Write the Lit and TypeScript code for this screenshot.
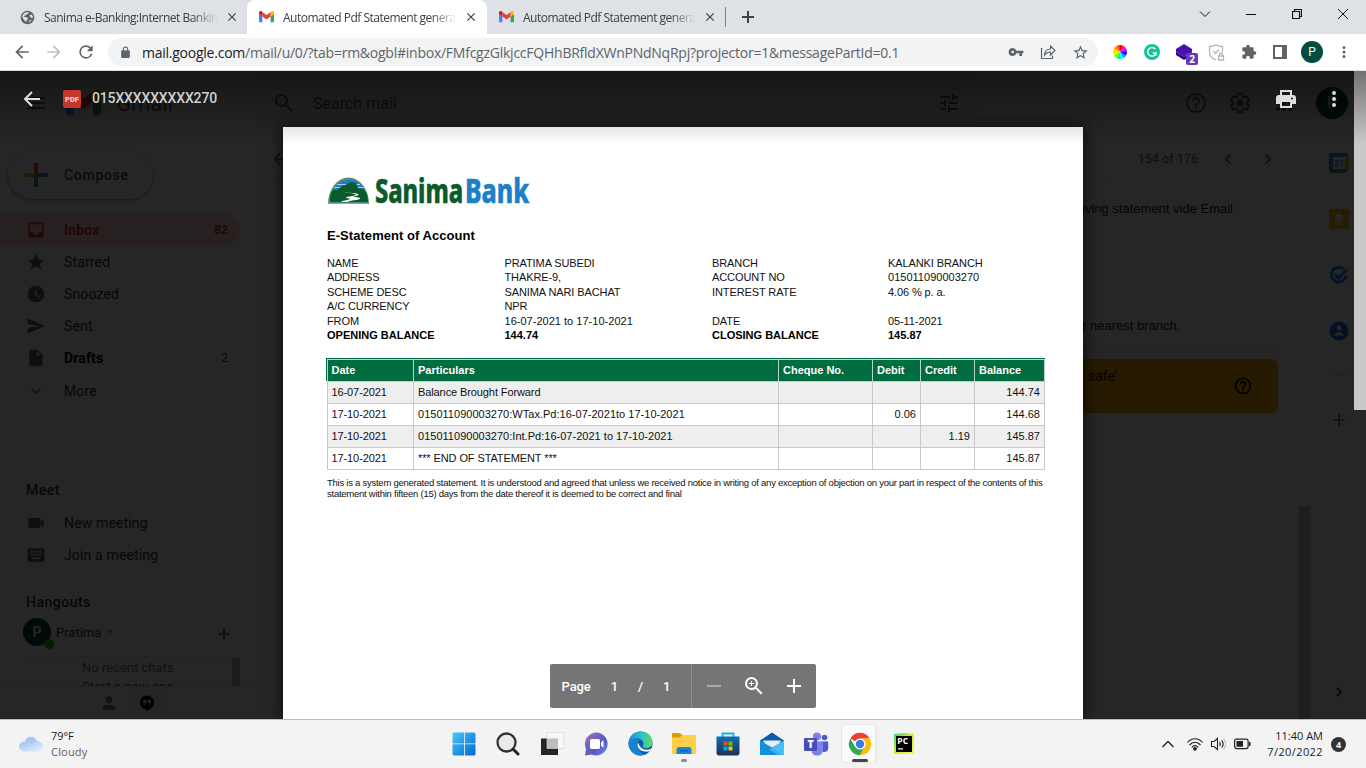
import { LitElement, html, css, svg } from "lit";
import { customElement } from "lit/decorators.js";

/* ---------- shared icon helpers ---------- */

const icon = (d: string, size = 20, box = "0 0 24 24") =>
  html`<svg width=${size} height=${size} viewBox=${box} fill="currentColor"><path d=${d}></path></svg>`;

const P = {
  back: "M20 11H7.83l5.59-5.59L12 4l-8 8 8 8 1.41-1.41L7.83 13H20v-2z",
  forward: "M12 4l-1.41 1.41L16.17 11H4v2h12.17l-5.58 5.59L12 20l8-8z",
  reload:
    "M17.65 6.35A7.96 7.96 0 0 0 12 4a8 8 0 1 0 7.73 10h-2.08A6 6 0 1 1 12 6c1.66 0 3.14.69 4.22 1.78L13 11h7V4l-2.35 2.35z",
  lock: "M18 8h-1V6A5 5 0 0 0 7 6v2H6a2 2 0 0 0-2 2v10c0 1.1.9 2 2 2h12a2 2 0 0 0 2-2V10a2 2 0 0 0-2-2zM8.9 6a3.1 3.1 0 0 1 6.2 0v2H8.9V6z",
  key: "M12.65 10A5.99 5.99 0 0 0 7 6a6 6 0 1 0 5.65 8H17v4h4v-4h2v-4H12.65zM7 14a2 2 0 1 1 0-4 2 2 0 0 1 0 4z",
  star: "M22 9.24l-7.19-.62L12 2 9.19 8.63 2 9.24l5.46 4.73L5.82 21 12 17.27 18.18 21l-1.63-7.03L22 9.24zM12 15.4l-3.76 2.27 1-4.28-3.32-2.88 4.38-.38L12 6.1l1.71 4.04 4.38.38-3.32 2.88 1 4.28L12 15.4z",
  starFull: "M12 17.27L18.18 21l-1.64-7.03L22 9.24l-7.19-.61L12 2 9.19 8.63 2 9.24l5.46 4.73L5.82 21z",
  puzzle:
    "M20.5 11H19V7a2 2 0 0 0-2-2h-4V3.5a2.5 2.5 0 0 0-5 0V5H4a2 2 0 0 0-2 2v3.8h1.5a2.7 2.7 0 0 1 0 5.4H2V20c0 1.1.9 2 2 2h3.8v-1.5a2.7 2.7 0 0 1 5.4 0V22H17a2 2 0 0 0 2-2v-4h1.5a2.5 2.5 0 0 0 0-5z",
  dots: "M12 8a2 2 0 1 0 0-4 2 2 0 0 0 0 4zm0 2a2 2 0 1 0 0 4 2 2 0 0 0 0-4zm0 6a2 2 0 1 0 0 4 2 2 0 0 0 0-4z",
  menu: "M3 18h18v-2H3v2zm0-5h18v-2H3v2zm0-7v2h18V6H3z",
  search:
    "M15.5 14h-.79l-.28-.27A6.47 6.47 0 0 0 16 9.5 6.5 6.5 0 1 0 9.5 16c1.61 0 3.09-.59 4.23-1.57l.27.28v.79l5 4.99L20.49 19l-4.99-5zm-6 0a4.5 4.5 0 1 1 0-9 4.5 4.5 0 0 1 0 9z",
  zoomIn:
    "M15.5 14h-.79l-.28-.27A6.47 6.47 0 0 0 16 9.5 6.5 6.5 0 1 0 9.5 16c1.61 0 3.09-.59 4.23-1.57l.27.28v.79l5 4.99L20.49 19l-4.99-5zm-6 0a4.5 4.5 0 1 1 0-9 4.5 4.5 0 0 1 0 9zm2.5-4h-2v2H9v-2H7V9h2V7h1v2h2v1z",
  tune: "M3 17v2h6v-2H3zM3 5v2h10V5H3zm10 16v-2h8v-2h-8v-2h-2v6h2zM7 9v2H3v2h4v2h2V9H7zm14 4v-2H11v2h10zm-6-4h2V7h4V5h-4V3h-2v6z",
  help: "M11 18h2v-2h-2v2zm1-16a10 10 0 1 0 0 20 10 10 0 0 0 0-20zm0 18a8 8 0 1 1 0-16 8 8 0 0 1 0 16zm0-14a4 4 0 0 0-4 4h2a2 2 0 1 1 4 0c0 2-3 1.75-3 5h2c0-2.25 3-2.5 3-5a4 4 0 0 0-4-4z",
  gear: "M13.85 22.25h-3.7c-.74 0-1.36-.54-1.45-1.27l-.27-1.89c-.27-.14-.53-.29-.79-.46l-1.8.72c-.7.26-1.47-.03-1.81-.65L2.2 15.53c-.35-.66-.2-1.44.36-1.88l1.53-1.19c-.01-.15-.02-.3-.02-.46 0-.15.01-.31.02-.46l-1.52-1.19c-.59-.45-.74-1.26-.37-1.88l1.85-3.19c.34-.62 1.11-.9 1.79-.63l1.81.73c.26-.17.52-.32.78-.46l.27-1.91c.09-.7.71-1.25 1.44-1.25h3.7c.74 0 1.36.54 1.45 1.27l.27 1.89c.27.14.53.29.79.46l1.8-.72c.71-.26 1.48.03 1.82.65l1.84 3.18c.36.66.2 1.44-.36 1.88l-1.52 1.19c.01.15.02.3.02.46s-.01.31-.02.46l1.52 1.19c.56.45.72 1.23.37 1.86l-1.86 3.22c-.34.62-1.11.9-1.8.63l-1.8-.72c-.26.17-.52.32-.78.46l-.27 1.91c-.1.68-.72 1.22-1.46 1.22zm-3.23-2h2.76l.37-2.55.53-.22c.44-.18.88-.44 1.34-.78l.45-.34 2.38.96 1.38-2.4-2.03-1.58.07-.56c.03-.26.06-.51.06-.78s-.03-.53-.06-.78l-.07-.56 2.03-1.58-1.39-2.4-2.39.96-.45-.35c-.42-.32-.87-.58-1.33-.77l-.52-.22-.37-2.55h-2.76l-.37 2.55-.53.21c-.44.19-.88.44-1.34.79l-.45.33-2.38-.95-1.39 2.39 2.03 1.58-.07.56a7 7 0 0 0-.06.79c0 .26.02.53.06.78l.07.56-2.03 1.58 1.38 2.4 2.39-.96.45.35c.43.33.86.58 1.33.77l.53.22.38 2.55zM12 8.5a3.5 3.5 0 1 0 0 7 3.5 3.5 0 0 0 0-7z",
  apps: "M6 8a2 2 0 1 0 0-4 2 2 0 0 0 0 4zm6 12a2 2 0 1 0 0-4 2 2 0 0 0 0 4zm-6 0a2 2 0 1 0 0-4 2 2 0 0 0 0 4zm0-6a2 2 0 1 0 0-4 2 2 0 0 0 0 4zm6 0a2 2 0 1 0 0-4 2 2 0 0 0 0 4zm6-10a2 2 0 1 0 0 4 2 2 0 0 0 0-4zm-6 4a2 2 0 1 0 0-4 2 2 0 0 0 0 4zm6 6a2 2 0 1 0 0-4 2 2 0 0 0 0 4zm0 6a2 2 0 1 0 0-4 2 2 0 0 0 0 4z",
  print:
    "M19 8h-1V3H6v5H5a3 3 0 0 0-3 3v6h4v4h12v-4h4v-6a3 3 0 0 0-3-3zM8 5h8v3H8V5zm8 12v2H8v-4h8v2zm2-4.5a1 1 0 1 1 0-2 1 1 0 0 1 0 2z",
  inbox: "M19 3H5a2 2 0 0 0-2 2v14c0 1.1.9 2 2 2h14a2 2 0 0 0 2-2V5a2 2 0 0 0-2-2zm0 12h-4c0 1.66-1.35 3-3 3s-3-1.34-3-3H5V5h14v10z",
  clock: "M12 2a10 10 0 1 0 0 20 10 10 0 0 0 0-20zm4.2 14.2L11 13V7h1.5v5.2l4.5 2.7-.8 1.3z",
  send: "M2 21l21-9L2 3v7l15 2-15 2v7z",
  draft: "M14 2H6a2 2 0 0 0-2 2v16c0 1.1.9 2 2 2h12a2 2 0 0 0 2-2V8l-6-6zm-1 7V3.5L18.5 9H13z",
  down: "M7.41 8.59L12 13.17l4.59-4.58L18 10l-6 6-6-6z",
  left: "M15.41 7.41L14 6l-6 6 6 6 1.41-1.41L10.83 12z",
  right: "M10 6L8.59 7.41 13.17 12l-4.58 4.59L10 18l6-6z",
  video: "M17 10.5V7a1 1 0 0 0-1-1H4a1 1 0 0 0-1 1v10c0 .55.45 1 1 1h12a1 1 0 0 0 1-1v-3.500l4 4v-11l-4 4z",
  keyboard:
    "M20 4H4a2 2 0 0 0-2 2v12c0 1.1.9 2 2 2h16a2 2 0 0 0 2-2V6a2 2 0 0 0-2-2zm-9 3h2v2h-2V7zm0 3.500h2v2h-2v-2zM8 7h2v2H8V7zm0 3.500h2v2H8v-2zm-1 2H5v-2h2v2zM7 9H5V7h2v2zm10 8H7v-2h10v2zm-1-4.500h-2v-2h2v2zM16 9h-2V7h2v2zm3 3.500h-2v-2h2v2zM19 9h-2V7h2v2z",
  plus: "M19 13h-6v6h-2v-6H5v-2h6V5h2v6h6v2z",
  person: "M12 12a4 4 0 1 0 0-8 4 4 0 0 0 0 8zm0 2c-2.670 0-8 1.340-8 4v2h16v-2c0-2.660-5.330-4-8-4z",
  hangouts:
    "M12 2a9.500 9.500 0 0 0-9.500 9.500A9.500 9.500 0 0 0 11.500 21v2c5-2.500 10-6.500 10-11.500A9.500 9.500 0 0 0 12 2zm-1 10l-1.500 3H8l1.500-3H7V8h4v4zm6 0l-1.500 3H14l1.500-3H13V8h4v4z",
  close: "M19 6.410L17.590 5 12 10.590 6.410 5 5 6.410 10.590 12 5 17.590 6.410 19 12 13.410 17.590 19 19 17.590 13.410 12z",
};

const gmailMark = (w: number) => html`
  <svg width=${w} height=${w * 0.75} viewBox="0 0 88 66">
    <path fill="#4285f4" d="M6 66h14V32L0 17v43c0 3.300 2.700 6 6 6"></path>
    <path fill="#34a853" d="M68 66h14c3.300 0 6-2.700 6-6V17L68 32"></path>
    <path fill="#fbbc04" d="M68 6v26l20-15V9c0-7.400-8.500-11.700-14.400-7.200"></path>
    <path fill="#ea4335" d="M20 32V6l24 18L68 6v26L44 50"></path>
    <path fill="#c5221f" d="M0 9v8l20 15V6l-5.600-4.200C8.500-2.700 0 1.600 0 9"></path>
  </svg>`;

const base = css`
  *, *::before, *::after { box-sizing: border-box; }
  svg { display: block; flex: none; }
`;

/* ---------- browser frame ---------- */

@customElement("browser-bar")
class BrowserBar extends LitElement {
  static styles = [base, css`
    :host { display: block; font-family: "Open Sans", "Noto Sans", sans-serif; }
    .strip { display: flex; height: 34px; background: #dee1e6; color: #3c4043; }
    .tab { display: flex; align-items: center; height: 34px; width: 239px; padding: 0 8px 0 12px; font-size: 12px; }
    .tab.first { width: 247px; padding: 0 8px 0 20px; border-radius: 0 0 8px 0; }
    .tab.active { width: 240px; background: #fff; border-radius: 8px 8px 0 0; padding-left: 12px; padding-right: 9px; }
    .tab.last { width: 238px; }
    .label {
      flex: 1; margin-left: 9px; margin-right: 7px; overflow: hidden; white-space: nowrap; letter-spacing: -0.5px;
      mask-image: linear-gradient(90deg, #000 calc(100% - 26px), transparent);
    }
    .x { color: #3c4043; }
    .newtab { display: flex; align-items: center; gap: 12px; height: 34px; color: #3c4043; }
    .sep { width: 1px; height: 20px; background: #80868b; }
    .grow { flex: 1; }
    .wins { display: flex; height: 28px; color: #111; }
    .win { width: 46px; display: grid; place-items: center; }
    .toolbar { display: flex; align-items: center; height: 37px; background: #fff; border-bottom: 1px solid #dadfdd; color: #5f6368; }
    .navs { display: flex; width: 108px; padding-left: 12px; gap: 12px; }
    .dim { color: #bdc1c6; }
    .omni { display: flex; align-items: center; width: 990px; height: 28px; border-radius: 14px; background: #f1f3f4; padding: 0 9px 0 11px; }
    .url { flex: 1; margin-left: 10px; font-size: 14px; letter-spacing: -0.245px; white-space: nowrap; color: #5f6368; }
    .host { color: #202124; }
    .acts { display: flex; align-items: center; gap: 16px; }
    .exts { display: flex; align-items: center; gap: 16px; padding-left: 14px; }
    .badged { position: relative; }
    .badge {
      position: absolute; left: 10px; top: 9px; width: 12px; height: 12px; border-radius: 2px; background: #673ab7;
      color: #fff; font-size: 10px; font-weight: 700; line-height: 12px; text-align: center;
    }
    .me { width: 22px; height: 22px; border-radius: 50%; background: #004d40; color: #fff; font: 12px/22px Roboto, sans-serif; text-align: center; margin: 0 -4px 0 -2px; }
  `];

  render() {
    const x = html`<span class="x">${icon(P.close, 14)}</span>`;
    const wheel = ["#f00", "#f0c", "#c0f", "#30f", "#09f", "#0ff", "#0f6", "#6f0", "#cf0", "#fd0", "#f80", "#f40"];
    return html`
      <div class="strip">
        <div class="tab first">
          <svg width="15" height="15" viewBox="0 0 16 16">
            <circle cx="8" cy="8" r="7.300" fill="#5f6368"></circle>
            <path fill="#dee1e6" d="M8.500 2c1.500.5.5 2-1 2.200C6 4.500 6.500 6 5 6.200S3.500 7 5 7.500s3.500 0 3.500 1.500-1.500 1.200-1.500 2.500-1 1.500-1.500.5S3 9.500 2.500 7.500C2.300 5 4.500 2 8.500 2zM11 5c1.500-.5 2.500 1 2.700 2.500S12.500 9 11.500 8 9.500 5.500 11 5zM9.500 12c.2-1 2-2 2.500-1.500s-1.500 2.700-2.200 2.500-.4-.5-.3-1z"></path>
          </svg>
          <span class="label">Sanima e-Banking:Internet Banking</span>${x}
        </div>
        <div class="tab active">${gmailMark(15)}<span class="label">Automated Pdf Statement generated</span>${x}</div>
        <div class="tab last">${gmailMark(15)}<span class="label">Automated Pdf Statement generated</span>${x}</div>
        <div class="newtab"><span class="sep"></span>
          <svg width="20" height="20" viewBox="0 0 20 20" stroke="currentColor" stroke-width="2"><path d="M10 4v12M4 10h12"></path></svg>
        </div>
        <div class="grow"></div>
        <div class="wins">
          <div class="win"><svg width="12" height="8" viewBox="0 0 12 8" fill="none" stroke="currentColor"><path d="M1 1.500l5 5 5-5"></path></svg></div>
          <div class="win"><svg width="10" height="10" viewBox="0 0 10 10" stroke="currentColor"><path d="M0 5.500h10"></path></svg></div>
          <div class="win"><svg width="10" height="10" viewBox="0 0 10 10" fill="none" stroke="currentColor" stroke-width="1.200"><path d="M.5 2.500h7v7h-7zM2.500 2.500v-2h7v7h-2"></path></svg></div>
          <div class="win"><svg width="10" height="10" viewBox="0 0 10 10" stroke="currentColor"><path d="M0 0l10 10M10 0L0 10"></path></svg></div>
        </div>
      </div>
      <div class="toolbar">
        <div class="navs">
          ${icon(P.back, 20)}<span class="dim">${icon(P.forward, 20)}</span>${icon(P.reload, 20)}
        </div>
        <div class="omni">
          ${icon(P.lock, 13)}
          <span class="url"><span class="host">mail.google.com</span>/mail/u/0/?tab=rm&amp;ogbl#inbox/FMfcgzGlkjccFQHhBRfldXWnPNdNqRpj?projector=1&amp;messagePartId=0.1</span>
          <div class="acts">
            ${icon(P.key, 16)}
            <svg width="16" height="16" viewBox="0 0 16 16" fill="none" stroke="currentColor" stroke-width="1.200"><path d="M2.500 4.500h-1v10h11v-3M4.500 11c.2-3.800 2.500-6 6-6V2l4.500 4.500-4.500 4.500V8c-2.800 0-4.500.7-6 3z"></path></svg>
            ${icon(P.star, 17)}
          </div>
        </div>
        <div class="exts">
          <svg width="16" height="16" viewBox="-8 -8 16 16">
            ${wheel.map((c, i) => {
              const a = ((i * 30 - 90) * Math.PI) / 180, b = a + Math.PI / 6;
              return svg`<path fill=${c} d="M0 0L${7 * Math.cos(a)} ${7 * Math.sin(a)}A7 7 0 0 1 ${7 * Math.cos(b)} ${7 * Math.sin(b)}z"></path>`;
            })}
          </svg>
          <svg width="16" height="16" viewBox="0 0 16 16"><circle cx="8" cy="8" r="8" fill="#15c39a"></circle>
            <path fill="none" stroke="#fff" stroke-width="1.400" d="M11.500 5.200A4.300 4.300 0 1 0 12.200 9H8.800M12 9.500v2"></path></svg>
          <span class="badged">
            <svg width="16" height="16" viewBox="0 0 16 16"><path fill="#2a0a7c" d="M0 8l8 4.500L16 8v3l-8 5-8-5z"></path><path fill="#4b0fb0" d="M8 0l8 5v3l-8 4.500L0 8V5z"></path></svg>
            <span class="badge">2</span>
          </span>
          <svg width="17" height="17" viewBox="0 0 17 17" fill="none" stroke="#b4b7ba" stroke-width="1.300"><path d="M8 1c2 1.200 4 1.500 6.500 1.500V8M8 1C6 2.200 4 2.500 1.500 2.500V8c0 3.500 2.500 6.500 6.500 8M5 7l2.500 2.500L11 5.500M10.500 12h5v4h-5zM11.500 12v-1.500a1.500 1.500 0 0 1 3 0V12"></path></svg>
          ${icon(P.puzzle, 16)}
          <svg width="14" height="14" viewBox="0 0 14 14" fill="none" stroke="currentColor" stroke-width="2"><path d="M1 1h12v12H1z"></path><path fill="currentColor" stroke="none" d="M9 1h4v12H9z"></path></svg>
          <span class="me">P</span>
          ${icon(P.dots, 18)}
        </div>
      </div>`;
  }
}

/* ---------- mailbox behind the viewer ---------- */

@customElement("mail-page")
class MailPage extends LitElement {
  static styles = [base, css`
    :host { display: flex; flex-direction: column; height: 649px; width: 1354px; background: #fff; color: #333; font-family: Roboto, sans-serif; overflow: hidden; }
    .ic { color: #5f6368; }
    .head { display: flex; align-items: center; height: 64px; border-bottom: 1px solid #eceff1; flex: none; }
    .brand { display: flex; align-items: center; width: 256px; padding-left: 24px; color: #5f6368; }
    .mark { margin-left: 18px; }
    .word { margin-left: 15px; font-size: 22px; padding-top: 2px; }
    .find { display: flex; align-items: center; width: 722px; height: 48px; border-radius: 8px; background: #f1f3f4; padding: 0 17px 0 16px; color: #5f6368; }
    .hint { flex: 1; margin-left: 17px; font-size: 16px; padding-top: 2px; }
    .tools { flex: 1; display: flex; align-items: center; justify-content: flex-end; gap: 20px; color: #5f6368; padding-right: 6px; }
    .me { width: 32px; height: 32px; border-radius: 50%; background: #004d40; color: #fff; font-size: 16px; line-height: 32px; text-align: center; }
    .body { display: flex; flex: 1; min-height: 0; }
    .side { width: 256px; display: flex; flex-direction: column; padding-top: 16px; }
    .compose { display: flex; align-items: center; width: 145px; height: 48px; margin-left: 8px; padding: 0 0 1px 16px; border-radius: 24px; box-shadow: 0 1px 2px rgba(60,64,67,.3), 0 1px 3px 1px rgba(60,64,67,.2); font-size: 14px; font-weight: 500; letter-spacing: .7px; color: #4c4f53; }
    .compose span { margin-left: 16px; }
    .nav { margin-top: 15px; }
    .row { display: flex; align-items: center; height: 32px; width: 240px; padding: 0 12px 0 26px; font-size: 14px; color: #333; border-radius: 0 16px 16px 0; }
    .row svg { color: #5f6368; }
    .row .t { flex: 1; margin-left: 18px; letter-spacing: .15px; }
    .row .n { font-size: 12px; }
    .row.on { background: #fcd9d4; color: #d93025; font-weight: 700; }
    .row.on svg { color: #d93025; }
    .row.b .t { font-weight: 700; color: #000; }
    .nav .row:last-child { padding-top: 2px; }
    .cap { height: 32px; line-height: 32px; padding-left: 26px; font-size: 14px; font-weight: 500; letter-spacing: .5px; }
    .meet { margin-top: 68px; padding-bottom: 6px; border-bottom: 1px solid #eee; }
    .meet .cap { height: 33px; }
    .meet .row { letter-spacing: .1px; }
    .hang { padding-top: 8px; }
    .acct { display: flex; align-items: center; height: 28px; margin: 0 22px 11px 23px; }
    .face { position: relative; width: 28px; height: 28px; border-radius: 50%; background: #004d40; color: #fff; font-size: 14px; font-weight: 500; line-height: 28px; text-align: center; }
    .dot { position: absolute; right: -3px; bottom: -3px; width: 10px; height: 10px; border-radius: 50%; background: #0c0; }
    .nm { margin-left: 5px; font-size: 13px; }
    .tri { margin-left: 6px; border: 3.500px solid transparent; border-top: 4px solid #999; border-bottom: 0; }
    .acct .ic { margin-left: auto; padding-top: 3px; }
    .chats { display: flex; height: 29px; margin-left: 23px; width: 217px; border-top: 1px solid #ddd; overflow: hidden; }
    .msgs { flex: 1; padding-left: 59px; font-size: 13px; line-height: 19px; color: #777; white-space: nowrap; }
    .link { color: #15c; letter-spacing: .1px; }
    .thumb { width: 8px; background: #bbb; }
    .foot { display: flex; height: 33px; border-top: 1px solid #ddd; padding-left: 89px; color: #777; }
    .ft { width: 40px; display: grid; place-items: center; }
    .ft.sel { width: 35px; background: #f4f4f4; border: 1px solid #e4e4e4; border-width: 0 1px; color: #000; }
    .main { width: 1036px; }
    .bar { display: flex; align-items: center; justify-content: flex-end; height: 49px; border-bottom: 1px solid #eee; color: #5f6368; font-size: 12px; }
    .bar .lead { margin-left: 14px; margin-right: auto; }
    .count { letter-spacing: .25px; margin-right: 20px; }
    .bar .pair { display: flex; gap: 20px; padding-right: 14px; }
    .mail { font: 13px/20px "Liberation Sans", Arial, sans-serif; color: #222; width: 982px; margin-left: 40px; padding-left: 786px; white-space: nowrap; }
    .l1 { padding-top: 15px; }
    .l2 { padding-top: 97px; padding-bottom: 15px; border-bottom: 1px dotted #ccc; }
    .warn { display: flex; justify-content: space-between; width: 982px; height: 54px; margin: 7px 0 0 40px; padding: 8px 25px 0 792px; border-radius: 6px; background: #fbb000; font-size: 14px; line-height: 19px; color: #202124; }
    .warn svg { margin-top: 9px; color: #000; }
    .lane { width: 19px; padding: 371px 1px 0 7px; }
    .lane i { display: block; height: 214px; background: #c8c8c8; }
    .rail { width: 43px; border-left: 1px solid #eee; display: flex; flex-direction: column; align-items: center; padding: 18px 0 0 11px; gap: 36px; }
    .rule { width: 20px; height: 1px; background: #ddd; margin: -2px 0; }
    .open { margin-top: auto; margin-bottom: 18px; color: #333; }
  `];

  render() {
    const row = (p: string, t: string, n = "", c = "") =>
      html`<div class="row ${c}">${icon(p, 20)}<span class="t">${t}</span><span class="n">${n}</span></div>`;
    return html`
      <div class="head">
        <div class="brand">${icon(P.menu, 24)}<span class="mark">${gmailMark(35)}</span><span class="word">Gmail</span></div>
        <div class="find">${icon(P.search, 24)}<span class="hint">Search mail</span>${icon(P.tune, 24)}</div>
        <div class="tools">${icon(P.help, 24)}${icon(P.gear, 24)}${icon(P.apps, 24)}<span class="me">P</span></div>
      </div>
      <div class="body">
        <div class="side">
          <div class="compose">
            <svg width="24" height="24" viewBox="0 0 24 24"><path fill="#ea4335" d="M10 0h4v12h-4z"></path><path fill="#34a853" d="M10 12h4v12h-4z"></path><path fill="#4285f4" d="M13 10h11v4H10z"></path><path fill="#fbbc04" d="M0 10h11l-1 4H0z"></path></svg>
            <span>Compose</span>
          </div>
          <div class="nav">
            ${row(P.inbox, "Inbox", "82", "on")}${row(P.starFull, "Starred")}${row(P.clock, "Snoozed")}
            ${row(P.send, "Sent")}${row(P.draft, "Drafts", "2", "b")}${row(P.down, "More")}
          </div>
          <div class="meet">
            <div class="cap">Meet</div>
            ${row(P.video, "New meeting")}${row(P.keyboard, "Join a meeting")}
          </div>
          <div class="hang">
            <div class="cap">Hangouts</div>
            <div class="acct">
              <span class="face">P<i class="dot"></i></span><span class="nm">Pratima</span><i class="tri"></i>
              <span class="ic">${icon(P.plus, 20)}</span>
            </div>
            <div class="chats"><div class="msgs">No recent chats<br /><span class="link">Start a new one</span></div><i class="thumb"></i></div>
            <div class="foot"><div class="ft">${icon(P.person, 20)}</div><div class="ft sel">${icon(P.hangouts, 18)}</div></div>
          </div>
        </div>
        <div class="main">
          <div class="bar">
            <span class="lead">${icon(P.back, 20)}</span><span class="count">154 of 176</span>
            <span class="pair">${icon(P.left, 20)}${icon(P.right, 20)}</span>
          </div>
          <div class="mail l1">iving statement vide Email</div>
          <div class="mail l2">r nearest branch.</div>
          <div class="warn"><span>safe'</span>${icon(P.help, 20)}</div>
        </div>
        <div class="lane"><i></i></div>
        <div class="rail">
          <svg width="20" height="20" viewBox="0 0 20 20"><path fill="#fff" d="M3 3h13v13H3z"></path><path fill="#4285f4" d="M1 0h18v4H4v12H0V1z"></path><path fill="#fbbc04" d="M16 4h4v12h-4z"></path><path fill="#34a853" d="M0 16h16v4H1z"></path><path fill="#ea4335" d="M16 16h4l-4 4z"></path><text x="10" y="13.500" font-family="Roboto" font-size="9" font-weight="700" text-anchor="middle" fill="#4285f4">31</text></svg>
          <svg width="20" height="20" viewBox="0 0 20 20"><rect width="20" height="20" rx="1.500" fill="#fbbc04"></rect><path fill="#fff" d="M10 4.500a4 4 0 0 0-2.300 7.300V13h4.600v-1.200A4 4 0 0 0 10 4.500zM8 14h4v1.500H8z"></path></svg>
          <svg width="20" height="20" viewBox="0 0 20 20" fill="none" stroke="#2684fc" stroke-width="3"><path d="M14.500 4A7.300 7.300 0 1 0 17 10.500"></path><path d="M6 9.500l3.500 3.500L18 4"></path></svg>
          <svg width="20" height="20" viewBox="0 0 20 20"><circle cx="10" cy="10" r="9.500" fill="#1a73e8"></circle><circle cx="10" cy="7" r="2.400" fill="#fff"></circle><path fill="#fff" d="M5.500 14.500c0-4.500 9-4.500 9 0z"></path></svg>
          <i class="rule"></i>
          <span class="ic">${icon(P.plus, 20)}</span>
          <span class="open">${icon(P.right, 20)}</span>
        </div>
      </div>`;
  }
}

/* ---------- attachment viewer ---------- */

@customElement("bank-statement")
class BankStatement extends LitElement {
  static styles = [base, css`
    :host { display: block; width: 800px; height: 593px; padding: 48px 38px 0 44px; background: #fff; box-shadow: 0 0 14px 2px rgba(0,0,0,.6); font: 11px/14.400px "Liberation Sans", Arial, sans-serif; color: #111; letter-spacing: -.1px; }
    .logo { margin-left: 1px; }
    h1 { margin: 20px 0 0; font-size: 13px; line-height: 18px; letter-spacing: .05px; color: #000; }
    .facts { display: grid; grid-template-columns: 177.500px 207.500px 176px 1fr; grid-auto-rows: 14.400px; margin-top: 11px; white-space: nowrap; }
    .digits { letter-spacing: .02px; }
    .strong { font-weight: 700; color: #000; letter-spacing: 0; }
    .grid { margin: 16px 0 0 -1px; border-top: 1px solid #006c3f; padding-left: 1px; width: 719px; height: 112px; background: linear-gradient(#006c3f 22px, transparent 22px); }
    table { border-collapse: collapse; table-layout: fixed; width: 718px; background: #fff; }
    th, td { height: 22px; padding: 0 4px 2px; border: 1px solid #c8c8c8; text-align: left; white-space: nowrap; }
    th:first-child, td:first-child { padding-left: 3.500px; }
    th { background: #006c3f; color: #fff; border-color: #b9d3c6; letter-spacing: 0; }
    tr.alt td { background: #eee; }
    td.num { text-align: right; letter-spacing: 0; }
    .note { margin-top: 7px; font-size: 9.500px; line-height: 11px; letter-spacing: -.252px; white-space: nowrap; }
  `];

  render() {
    const facts = [
      ["NAME", "PRATIMA SUBEDI", "BRANCH", "KALANKI BRANCH"],
      ["ADDRESS", "THAKRE-9,", "ACCOUNT NO", "015011090003270"],
      ["SCHEME DESC", "SANIMA NARI BACHAT", "INTEREST RATE", "4.06 % p. a."],
      ["A/C CURRENCY", "NPR", "", ""],
      ["FROM", "16-07-2021 to 17-10-2021", "DATE", "05-11-2021"],
    ];
    const last = ["OPENING BALANCE", "144.74", "CLOSING BALANCE", "145.87"];
    const rows = [
      ["16-07-2021", "Balance Brought Forward", "", "", "", "144.74"],
      ["17-10-2021", "015011090003270:WTax.Pd:16-07-2021to 17-10-2021", "", "0.06", "", "144.68"],
      ["17-10-2021", "015011090003270:Int.Pd:16-07-2021 to 17-10-2021", "", "", "1.19", "145.87"],
      ["17-10-2021", "*** END OF STATEMENT ***", "", "", "", "145.87"],
    ];
    const digits = (t: string) => (/^\d{2}/.test(t) && t.length > 10 ? "digits" : "");
    return html`
      <svg class="logo" width="206" height="32" viewBox="0 0 206 32">
        <defs><clipPath id="dome"><path d="M1.500 27.500a19.300 23 0 0 1 38.600 0z"></path></clipPath></defs>
        <path d="M0 29a20.500 26.500 0 0 1 41 0z" fill="#5c8f72"></path>
        <path d="M1 28.200a19.700 25 0 0 1 39 0z" fill="#f4f8f5"></path>
        <g clip-path="url(#dome)">
          <path fill="#1b7fc9" d="M0 0h42v30H0z"></path>
          <path stroke="#a9d2ee" stroke-width="1" d="M8 9.500h24M4 12.500h33M3 15.500h36"></path>
          <path fill="#0a5a2c" d="M0 17l5-2 4 0 5-4 3-1 6-3 5 1 2 5 5 1 6 5v10H0z"></path>
          <path fill="#fff" d="M14 17.500c6 .5 11 .5 13 1.500s0 1.700-4 2.200c-5 .6-7 1.500-2 2.300l1 .8c-3 1-8 1.500-9 2.700h6c3-1.500 12-2 13-3.200s-4-1.500-7-2c3-.7 7-1.500 5-2.700s-9-1.500-16-1.600z"></path>
        </g>
        <g font-family="Noto Sans" font-weight="800" font-size="34">
          <text x="47" y="27.500" textLength="88" lengthAdjust="spacingAndGlyphs" fill="#0a5a2c" stroke="#0a5a2c" stroke-width=".5">Sanima</text>
          <text x="137" y="27.500" textLength="64" lengthAdjust="spacingAndGlyphs" fill="#1b7fc9" stroke="#1b7fc9" stroke-width=".5">Bank</text>
        </g>
      </svg>
      <h1>E-Statement of Account</h1>
      <div class="facts">
        ${facts.flat().map((t) => html`<span class=${digits(t)}>${t}</span>`)}
        ${last.map((t) => html`<span class="strong">${t}</span>`)}
      </div>
      <div class="grid">
        <table>
          <colgroup><col width="86" /><col width="365" /><col width="94" /><col width="48" /><col width="54" /><col width="70" /></colgroup>
          <tr>${["Date", "Particulars", "Cheque No.", "Debit", "Credit", "Balance"].map((t) => html`<th>${t}</th>`)}</tr>
          ${rows.map((r, i) => html`<tr class=${i % 2 ? "" : "alt"}>${r.map((t, j) => html`<td class=${j > 2 ? "num" : digits(t)}>${t}</td>`)}</tr>`)}
        </table>
      </div>
      <div class="note">This is a system generated statement. It is understood and agreed that unless we received notice in writing of any exception of objection on your part in respect of the contents of this<br />statement within fifteen (15) days from the date thereof it is deemed to be correct and final</div>`;
  }
}

@customElement("file-viewer")
class FileViewer extends LitElement {
  static styles = [base, css`
    :host { display: block; font-family: Roboto, sans-serif; }
    .stage { display: flex; justify-content: center; padding-top: 56px; }
    .track { position: absolute; right: 0; top: 0; width: 12px; height: 649px; background: #262626; }
    .track i { display: block; height: 339px; background: #c9c9c9; }
    .shade { position: absolute; left: 0; right: 0; top: 0; height: 73px; background: linear-gradient(rgba(0,0,0,.43), transparent); }
    .head { position: absolute; left: 0; right: 0; top: 0; height: 56px; display: flex; align-items: center; padding: 0 22px; color: #ddd; }
    .pdf { width: 18px; height: 18px; margin-left: 21px; border-radius: 2px; background: #c5372c; color: #e8d0ce; font-size: 7.500px; font-weight: 900; line-height: 19px; text-align: center; }
    .name { margin-left: 11px; font-size: 14px; font-weight: 500; letter-spacing: -.15px; color: #d0d0d0; padding-bottom: 2px; }
    .right { margin-left: auto; display: flex; gap: 24px; align-items: center; margin-right: -2px; }
    .pager { position: absolute; left: 550px; top: 593px; width: 266px; height: 44px; border-radius: 2px; background: #757575; color: #fff; display: flex; align-items: center; font-size: 13px; font-weight: 500; }
    .pages { display: flex; align-items: center; width: 142px; height: 44px; padding-left: 11.500px; border-right: 1px solid #8f8f8f; white-space: pre; letter-spacing: -.1px; }
    .pages span:nth-child(2) { margin-left: 20px; }
    .pages span:nth-child(n + 3) { margin-left: 20px; }
    .zooms { flex: 1; display: flex; align-items: center; justify-content: space-between; padding: 0 12px 0 12px; }
    .off { color: #a8a8a8; }
  `];

  render() {
    return html`
      <div class="stage"><bank-statement></bank-statement></div>
      <div class="track"><i></i></div>
      <div class="shade"></div>
      <div class="head">
        <svg width="20" height="20" viewBox="0 0 20 20" fill="none" stroke="currentColor" stroke-width="2"><path d="M18 10H3.500M10 3l-7 7 7 7"></path></svg>
        <span class="pdf">PDF</span><span class="name">015XXXXXXXXX270</span>
        <div class="right">${icon(P.print, 24)}${icon(P.dots, 24)}</div>
      </div>
      <div class="pager">
        <div class="pages"><span>Page</span><span>1</span><span>/</span><span>1</span></div>
        <div class="zooms">
          <span class="off"><svg width="20" height="20" viewBox="0 0 20 20"><path fill="currentColor" d="M3 9h14v2H3z"></path></svg></span>
          ${icon(P.zoomIn, 24)}
          <svg width="20" height="20" viewBox="0 0 20 20"><path fill="currentColor" d="M3 9h14v2H3zM9 3h2v14H9z"></path></svg>
        </div>
      </div>`;
  }
}

/* ---------- desktop taskbar ---------- */

@customElement("task-bar")
class TaskBar extends LitElement {
  static styles = [base, css`
    :host { display: grid; grid-template-columns: 442px 484px 1fr; height: 48px; background: #f3f3f3; border-top: 1px solid #bbb; font-family: "Open Sans", "Noto Sans", sans-serif; font-size: 11px; color: #1b1b1b; }
    .weather { display: flex; align-items: center; padding-left: 18px; gap: 7px; line-height: 16px; letter-spacing: -.1px; }
    .soft { color: #5f5f5f; letter-spacing: .2px; }
    .apps { display: grid; grid-template-columns: repeat(11, 44px); }
    .app { display: grid; place-items: center; position: relative; height: 47px; }
    .app.run::after { content: ""; position: absolute; left: 19px; top: 39px; width: 6px; height: 3px; border-radius: 2px; background: #8a8a8a; }
    .app.cur::before { content: ""; position: absolute; left: 3px; top: 4px; width: 35px; height: 39px; border-radius: 4px; background: #fbfbfb; border: 1px solid #e6e6e6; box-shadow: 3px 0 0 #efefef; }
    .app.cur::after { content: ""; position: absolute; left: 14px; top: 39px; width: 16px; height: 3px; border-radius: 2px; background: #444; }
    .app svg { position: relative; }
    .tray { display: flex; align-items: center; justify-content: flex-end; padding-right: 20px; }
    .tray svg { margin-right: 7px; }
    .tray .chev { margin-right: 11px; }
    .tray .wifi { margin-right: 6px; }
    .time { text-align: right; line-height: 16px; margin: 0 8px 0 9px; white-space: nowrap; }
    .date { letter-spacing: .4px; }
    .note { width: 15px; height: 15px; border-radius: 50%; background: #333; color: #fff; font-size: 9px; font-weight: 700; line-height: 15px; text-align: center; }
  `];

  render() {
    const apps = [
      html`<svg width="24" height="24" viewBox="0 0 24 24"><defs><linearGradient id="w" x1="0" y1="0" x2="1" y2="1" ><stop stop-color="#4cc8fb"></stop><stop offset="1" stop-color="#0068cf"></stop></linearGradient></defs><path fill="url(#w)" d="M1.500.5h10.700v11H.5v-10zM13 .5h9.500l1 1v10H13zM.5 12.300h11.700v11.200H1.500l-1-1zM13 12.300h10.500v10.200l-1 1H13z"></path></svg>`,
      html`<svg width="24" height="24" viewBox="0 0 24 24" fill="none"><circle cx="10.500" cy="10.500" r="9" fill="#e9e9e9" stroke="#333" stroke-width="2.300"></circle><path stroke="#222" stroke-width="3" stroke-linecap="round" d="M17.500 17.500l4.500 4.500"></path></svg>`,
      html`<svg width="26" height="24" viewBox="0 0 26 24"><path fill="#252525" d="M2 6.500h17V23H2z"></path><path fill="#fafafa" opacity=".72" d="M8 .5h17v16H8z"></path><path fill="none" stroke="#d8d8d8" stroke-width=".7" d="M8 .5h17v16H8z"></path></svg>`,
      html`<svg width="24" height="24" viewBox="0 0 24 24"><defs><linearGradient id="c" x1="0" y1="0" x2="1" y2="1"><stop stop-color="#a877b5"></stop><stop offset=".6" stop-color="#5257c4"></stop><stop offset="1" stop-color="#7e8bea"></stop></linearGradient></defs><path fill="url(#c)" d="M12.500.5a11.500 11.500 0 1 1-5 22L1 23.500l1-6.500A11.500 11.500 0 0 1 12.500.5z"></path><rect x="6" y="7" width="10" height="10" rx="1.500" fill="#fff"></rect><path fill="#fff" d="M17 10.500l2.500-2.500v8L17 13.500z"></path></svg>`,
      html`<svg width="25" height="25" viewBox="0 0 25 25"><defs><linearGradient id="e" x1="0" y1="0" x2="1" y2="0"><stop stop-color="#1d93d8"></stop><stop offset=".55" stop-color="#2fc3c8"></stop><stop offset="1" stop-color="#66d955"></stop></linearGradient></defs><circle cx="12.500" cy="12.500" r="12" fill="#0c5aa8"></circle><path fill="#1683d3" d="M.5 12.500C1 8 8 5.500 12 9c-3 2-4.500 6-1 10.500 2 2.600 5 4 7 3.600A12 12 0 0 1 .5 12.500z"></path><path fill="url(#e)" d="M.7 11.500C1.800 4.500 7 .5 12.700.5c7 0 11.800 5 11.800 10.500 0 4-3 6-6 6-3.500 0-4.500-1.500-3.500-2.500 1-1.500.5-5-3-6.500C7.500 6.300 2.500 8 .7 11.500z"></path><path fill="#f3f3f3" d="M10.800 12c.5 5.500 6.200 8.500 13 5.500-.5 1.200-1.200 2-2 2.800-5 1.300-11.500-.5-12.300-5.300-.2-1.400.4-2.500 1.300-3z"></path></svg>`,
      html`<svg width="24" height="24" viewBox="0 0 24 24"><path fill="#dd9b08" d="M0 2.500C0 1.500.5 1 1.500 1H8l2.500 2.500L8 6H0z"></path><path fill="#ffcf48" d="M0 5.500h8L10.500 3H22.500c1 0 1.500.5 1.500 1.500V22H0z"></path><path fill="#1684d8" d="M4.500 22v-4.500c0-1.500 1-2.500 2.500-2.500h10c1.500 0 2.500 1 2.500 2.500V22z"></path><path fill="#0a61ae" d="M8 18h8v1.500H8z"></path></svg>`,
      html`<svg width="24" height="24" viewBox="0 0 24 24"><defs><linearGradient id="s" x1="0" y1="0" x2="0" y2="1"><stop stop-color="#0d6eb9"></stop><stop offset="1" stop-color="#20324f"></stop></linearGradient></defs><path fill="none" stroke="#1fa7e8" stroke-width="1.800" d="M6.500 6V1.500h11V6"></path><path fill="url(#s)" d="M.5 4.500h23V21c0 1.500-1 2.500-2.500 2.500H3C1.500 23.500.5 22.500.5 21z"></path><path fill="#f25022" d="M7.500 9.500h4v4h-4z"></path><path fill="#7fba00" d="M12.500 9.500h4v4h-4z"></path><path fill="#00a4ef" d="M7.500 14.500h4v4h-4z"></path><path fill="#ffb900" d="M12.500 14.500h4v4h-4z"></path></svg>`,
      html`<svg width="24" height="24" viewBox="0 0 24 24"><path fill="#0b5cad" d="M0 8.500L12 .5l12 8v2H0z"></path><path fill="#e9eef4" d="M2.500 8.500h19L13 16h-2z"></path><path fill="#31b4f2" d="M0 8.500l12 7 12-7V23H0z"></path><path fill="#1490df" d="M0 8.500l24 14.500H0z"></path><path fill="#53c9f8" d="M24 8.500L9 17.500 18 23h6z" opacity=".6"></path></svg>`,
      html`<svg width="26" height="24" viewBox="0 0 26 24"><circle cx="14" cy="4.500" r="4" fill="#7b83eb"></circle><circle cx="21.500" cy="5.500" r="2.800" fill="#5059c9"></circle><path fill="#5059c9" d="M18 9.500h7.200V16c0 3-2 4.500-5.200 4z"></path><path fill="#7b83eb" d="M8.500 9.500H20v8c0 4-2.500 6-6 6s-5.500-2-5.500-6z"></path><rect x="1" y="6" width="13" height="13" rx="1" fill="#4450b8"></rect><text x="7.500" y="16.300" fill="#fff" font-family="Open Sans" font-size="10.500" font-weight="800" text-anchor="middle">T</text></svg>`,
      html`<svg width="24" height="24" viewBox="-12 -12 24 24"><path fill="#ea4335" d="M-9.700-5.600A11.200 11.200 0 0 1 9.700-5.600H0A5.600 5.600 0 0 0-4.850-2.800z"></path><path fill="#34a853" d="M-9.700-5.600L-4.850 2.800A5.600 5.600 0 0 0 4.850 2.800L0 11.200A11.200 11.200 0 0 1-9.700-5.600z"></path><path fill="#fbbc04" d="M9.700-5.600A11.200 11.200 0 0 1 0 11.200L4.850 2.800A5.600 5.600 0 0 0 0-5.600z"></path><circle r="5.300" fill="#fff"></circle><circle r="4.200" fill="#3a7de8"></circle></svg>`,
      html`<svg width="22" height="22" viewBox="0 0 22 22"><defs><linearGradient id="p" x1="0" y1="0" x2="1" y2="1"><stop stop-color="#21d789"></stop><stop offset=".4" stop-color="#c8e635"></stop><stop offset="1" stop-color="#fcf84a"></stop></linearGradient></defs><path fill="url(#p)" d="M1 1l10-1 10 1v20H1z"></path><path fill="#000" d="M3 3h16v16H3z"></path><text x="4.300" y="11" fill="#fff" font-family="Open Sans" font-size="8.500" font-weight="700">PC</text><path fill="#fff" d="M5 15.300h5v1.200H5z"></path></svg>`,
    ];
    return html`
      <div class="weather">
        <svg width="26" height="18" viewBox="0 0 26 18"><defs><linearGradient id="k" x1="0" y1="0" x2="1" y2="1"><stop stop-color="#9dbfec"></stop><stop offset="1" stop-color="#eaf2fc"></stop></linearGradient></defs><path fill="#a9c6ef" d="M7 7a6 6 0 0 1 11.500-1.500L20 12H7z"></path><path fill="url(#k)" d="M6 16.500a5 5 0 1 1 1.500-9.800c3-.7 5 .8 6 2.500 2-3.500 6-4.500 8.500-2 4.500.3 4.500 9.300-1 9.300z"></path></svg>
        <div>79°F<br /><span class="soft">Cloudy</span></div>
      </div>
      <div class="apps">${apps.map((a, i) => html`<div class="app ${i === 5 ? "run" : i === 9 ? "cur" : ""}">${a}</div>`)}</div>
      <div class="tray">
        <svg class="chev" width="14" height="14" viewBox="0 0 14 14" fill="none" stroke="#222" stroke-width="1.300"><path d="M1.500 10L7 4.500l5.500 5.500"></path></svg>
        <svg class="wifi" width="18" height="16" viewBox="0 0 18 16" fill="none" stroke="#222" stroke-width="1.200"><path d="M1.500 6.500c4-5 11-5 15 0M3.500 9c3-3.700 8-3.700 11 0M5.800 11.300c1.800-2.200 4.600-2.200 6.400 0"></path><circle cx="9" cy="12.800" r="1.300" fill="#222"></circle></svg>
        <svg width="17" height="14" viewBox="0 0 17 14" fill="none" stroke="#222" stroke-width="1.100"><path d="M1.500 4.500h2.500l3.500-3v11l-3.500-3H1.500zM9.500 5c1 1.200 1 2.800 0 4M11.500 3.300c2 2.200 2 5.200 0 7.400"></path><path stroke="#bbb" d="M13.500 1.700c3 3.200 3 7.400 0 10.600"></path></svg>
        <svg width="17" height="12" viewBox="0 0 17 12"><rect x=".6" y="1.100" width="13.500" height="9.500" rx="2" fill="none" stroke="#222" stroke-width="1.200"></rect><path fill="#222" d="M2.500 3h6.500v5.800H2.500zM15 4h1.500v4H15z"></path></svg>
        <div class="time">11:40 AM<br /><span class="date">7/20/2022</span></div>
        <span class="note">4</span>
      </div>`;
  }
}

/* ---------- page ---------- */

@customElement("app-root")
class AppRoot extends LitElement {
  static styles = css`
    :host { display: flex; flex-direction: column; width: 1366px; height: 768px; overflow: hidden; }
    .view { position: relative; height: 649px; overflow: hidden; background: #fff; }
    .dimmer { position: absolute; inset: 0; background: rgba(0,0,0,.85); }
    .over { position: absolute; inset: 0; }
  `;

  render() {
    return html`
      <browser-bar></browser-bar>
      <div class="view">
        <mail-page></mail-page>
        <div class="dimmer"></div>
        <file-viewer class="over"></file-viewer>
      </div>
      <task-bar></task-bar>`;
  }
}
